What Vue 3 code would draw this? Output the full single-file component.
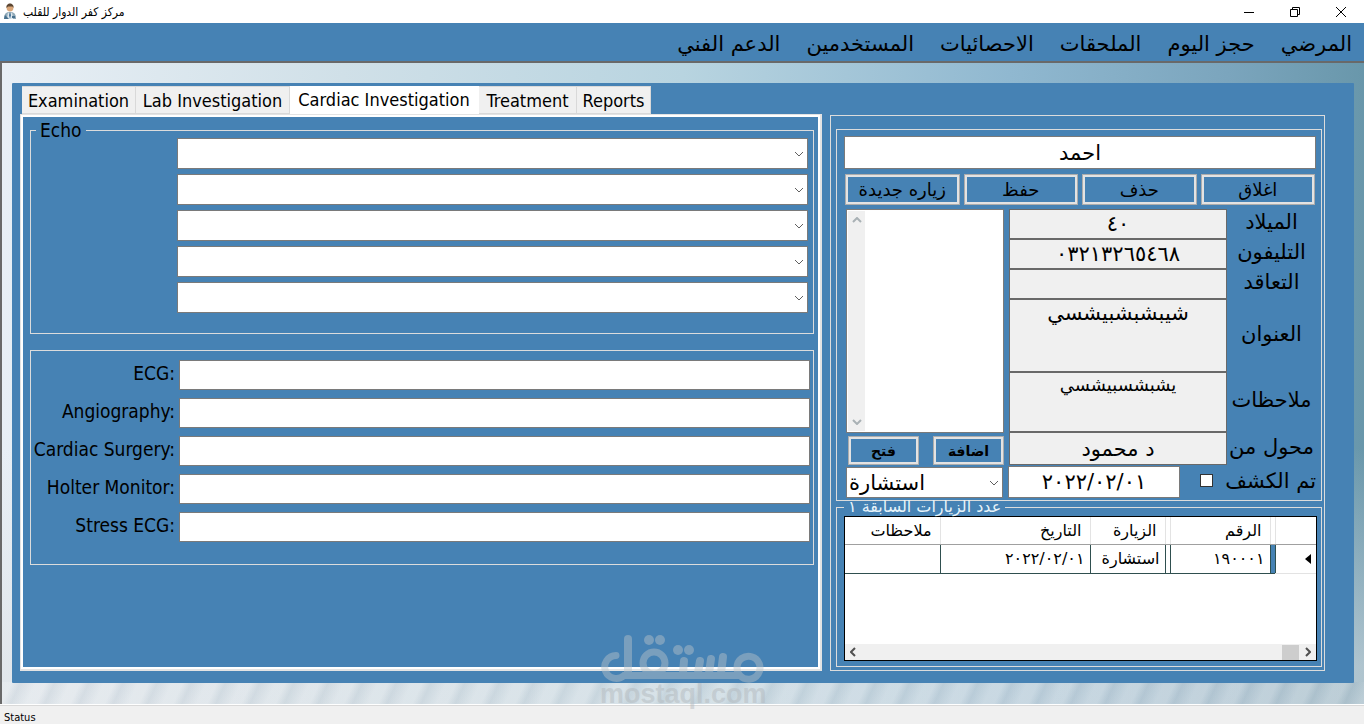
<script setup>
import { ref } from 'vue'

const menu = ['المرضي', 'حجز اليوم', 'الملحقات', 'الاحصائيات', 'المستخدمين', 'الدعم الفني']
const tabs = [
  { name: 'Examination', size: 't-exam' },
  { name: 'Lab Investigation', size: 't-lab' },
  { name: 'Cardiac Investigation', size: 't-cardiac' },
  { name: 'Treatment', size: 't-treat' },
  { name: 'Reports', size: 't-reports' },
]
const active = ref('Cardiac Investigation')
const echo = [1, 2, 3, 4, 5]
const tests = [
  { id: 'ecg', label: 'ECG:' },
  { id: 'angio', label: 'Angiography:' },
  { id: 'surgery', label: 'Cardiac Surgery:' },
  { id: 'holter', label: 'Holter Monitor:' },
  { id: 'stress', label: 'Stress ECG:' },
]
const actions = ['اغلاق', 'حذف', 'حفظ', 'زياره جديدة']
const patientName = ref('احمد')
const address = ref('شيبشبشبيشسي')
const notes = ref('يشبشسبيشسي')
const seen = ref(false)
</script>

<template>
  <div class="window">
    <header class="titlebar">
      <svg class="app-icon" viewBox="0 0 14 17" aria-hidden="true">
        <path d="M1 16c0-4 1-6 4-7h4c3 1 4 3 4 7z" fill="#8fa9b8" />
        <path d="M5 9l2 3 2-3 1 7H4z" fill="#dfe8ee" />
        <path d="M7 10l1 2-1 4-1-4z" fill="#3c6c92" />
        <path d="M2 12l4 4H1zM9 13h3v2H9z" fill="#47708d" />
        <circle cx="7" cy="5" r="3.4" fill="#d9a679" />
        <path d="M3.5 5C3 2 5 .5 7 .5S11 2 10.500 5L9.500 3.500H5z" fill="#5b4632" />
      </svg>
      <h1 class="title" dir="rtl">مركز كفر الدوار للقلب</h1>
      <div class="win-buttons">
        <button type="button" aria-label="Minimize">
          <svg viewBox="0 0 12 12"><path d="M1 6.500h10" /></svg>
        </button>
        <button type="button" aria-label="Restore">
          <svg viewBox="0 0 12 12"><path d="M1.500 3.500h7v7h-7zM3.500 3.500v-2h7v7h-2" /></svg>
        </button>
        <button type="button" aria-label="Close">
          <svg viewBox="0 0 12 12"><path d="M1 1l10 10M11 1L1 11" /></svg>
        </button>
      </div>
    </header>

    <nav class="menubar" dir="rtl">
      <a v-for="m in menu" :key="m" href="#">{{ m }}</a>
    </nav>

    <main class="desktop">
      <div class="sheet">
        <section class="left">
          <div class="tabs" role="tablist">
            <button
              v-for="t in tabs"
              :key="t.name"
              type="button"
              role="tab"
              :aria-selected="active === t.name"
              :class="['tab', t.size, { on: active === t.name }]"
              @click="active = t.name"
            >{{ t.name }}</button>
          </div>
          <div class="tab-page">
            <fieldset class="echo">
              <legend>Echo</legend>
              <div v-for="n in echo" :key="n" class="combo">
                <select :aria-label="'Echo ' + n"><option></option></select>
                <svg viewBox="0 0 10 6" aria-hidden="true"><path d="M1 1l4 4 4-4" /></svg>
              </div>
            </fieldset>
            <div class="tests">
              <template v-for="t in tests" :key="t.id">
                <label :for="t.id">{{ t.label }}</label>
                <input :id="t.id" type="text" />
              </template>
            </div>
          </div>
        </section>

        <section class="right" dir="rtl">
          <div class="patient">
            <input v-model="patientName" class="name" type="text" aria-label="اسم المريض" />
            <div class="actions">
              <button v-for="a in actions" :key="a" type="button" class="btn">{{ a }}</button>
            </div>
            <div class="details">
              <div class="labels">
                <label class="h-row" for="birth">الميلاد</label>
                <label class="h-row" for="phone">التليفون</label>
                <label class="h-row" for="contract">التعاقد</label>
                <label class="h-addr" for="address">العنوان</label>
                <label class="h-notes" for="notes">ملاحظات</label>
                <label class="h-ref" for="referrer">محول من</label>
              </div>
              <div class="fields">
                <input id="birth" class="h-row" readonly value="٤٠" />
                <input id="phone" class="h-row" readonly value="٠٣٢١٣٢٦٥٤٦٨" />
                <input id="contract" class="h-row" readonly value="" />
                <textarea id="address" v-model="address" class="h-addr" readonly></textarea>
                <textarea id="notes" v-model="notes" class="h-notes" readonly></textarea>
                <input id="referrer" class="h-ref" readonly value="د محمود" />
              </div>
              <div class="files">
                <div class="listbox">
                  <select size="2" aria-label="الملفات"></select>
                  <div class="vscroll">
                    <svg viewBox="0 0 10 6" aria-hidden="true"><path d="M1 5l4-4 4 4" /></svg>
                    <svg viewBox="0 0 10 6" aria-hidden="true"><path d="M1 1l4 4 4-4" /></svg>
                  </div>
                </div>
                <div class="file-buttons">
                  <button type="button" class="btn bold">اضافة</button>
                  <button type="button" class="btn bold">فتح</button>
                </div>
              </div>
            </div>
            <div class="visit">
              <label class="seen">تم الكشف <input v-model="seen" type="checkbox" /></label>
              <input class="date" type="text" aria-label="التاريخ" value="٢٠٢٢/٠٢/٠١" />
              <div class="combo kind" dir="ltr">
                <select aria-label="الزيارة"><option>استشارة</option></select>
                <svg viewBox="0 0 10 6" aria-hidden="true"><path d="M1 1l4 4 4-4" /></svg>
              </div>
            </div>
          </div>

          <fieldset class="history">
            <legend>عدد الزيارات السابقة ١</legend>
            <div class="grid">
              <table>
                <colgroup>
                  <col class="c-head" /><col class="c-thin" /><col class="c-no" /><col class="c-thin" />
                  <col class="c-visit" /><col class="c-date" /><col />
                </colgroup>
                <thead>
                  <tr>
                    <th></th><th></th><th>الرقم</th><th></th><th>الزيارة</th><th>التاريخ</th><th>ملاحظات</th>
                  </tr>
                </thead>
                <tbody>
                  <tr>
                    <td class="rowhead">
                      <svg viewBox="0 0 6 10" aria-hidden="true"><path d="M6 0v10L0 5z" /></svg>
                    </td>
                    <td class="picked"></td><td>١٩٠٠٠١</td><td></td><td>استشارة</td><td>٢٠٢٢/٠٢/٠١</td><td></td>
                  </tr>
                </tbody>
              </table>
              <div class="hscroll" dir="ltr">
                <svg viewBox="0 0 6 10" aria-hidden="true"><path d="M5 1L1 5l4 4" /></svg>
                <span class="thumb"></span>
                <svg viewBox="0 0 6 10" aria-hidden="true"><path d="M1 1l4 4-4 4" /></svg>
              </div>
            </div>
          </fieldset>
        </section>
      </div>
    </main>

    <footer class="status">Status</footer>

    <svg class="watermark" viewBox="0 0 166 76" role="img" aria-label="mostaql.com">
      <g opacity=".45">
        <g fill="none" stroke="#b9c2c8" stroke-linecap="round">
          <path d="M16 21.500a11.500 11.500 0 1 0 8 20H140a11.500 11.500 0 1 0-3-8 11.500 11.500 0 0 0 3 8" stroke-width="7" />
          <path d="M28 5v34" stroke-width="8" />
          <circle cx="54" cy="29" r="11" stroke-width="7" />
          <path d="M84 27l-1 12M100 27l-2 12M111 25l-2 14M123 23l-2 16" stroke-width="8" />
        </g>
        <g fill="#b9c2c8">
          <circle cx="49" cy="6" r="5" /><circle cx="60" cy="6" r="5" />
          <circle cx="78" cy="16" r="5" /><circle cx="89" cy="16" r="5" />
        </g>
        <text x="0" y="69">mostaql.com</text>
      </g>
    </svg>
  </div>
</template>

<style>
body {
  margin: 0;
}
</style>

<style scoped>
.window {
  --blue: #4682b4;
  --edge: #dcdcdc;
  position: relative;
  display: flex;
  flex-direction: column;
  min-height: 100vh;
  font-family: 'DejaVu Sans Condensed', 'DejaVu Sans', sans-serif;
  font-size: 19px;
  color: #000;
  background: #f0f0f0;
}
.window *,
.window {
  box-sizing: border-box;
}
button,
input,
select,
textarea {
  font: inherit;
  color: inherit;
  margin: 0;
  border-radius: 0;
}
.titlebar {
  display: flex;
  align-items: center;
  height: 23px;
  padding-left: 3px;
  background: #fff;
}
.app-icon {
  width: 14px;
  height: 17px;
}
.title {
  margin: 0 0 0 6px;
  font-size: 12px;
  font-weight: 400;
}
.win-buttons {
  display: flex;
  margin-left: auto;
}
.win-buttons button {
  display: flex;
  align-items: center;
  justify-content: center;
  width: 46px;
  height: 22px;
  padding: 0;
  border: 0;
  background: none;
}
.win-buttons svg {
  width: 12px;
  height: 12px;
  fill: none;
  stroke: #000;
}
.menubar {
  display: flex;
  align-items: center;
  gap: 26px;
  height: 38px;
  padding: 3px 12px 0;
  background: var(--blue);
}
.menubar a {
  color: #000;
  font-family: 'DejaVu Sans', sans-serif;
  font-size: 21px;
  text-decoration: none;
}
.desktop {
  display: flex;
  flex: 1;
  padding: 20px 10px 21px;
  border-top: 2px solid #696969;
  border-left: 2px solid #696969;
  background:
    repeating-linear-gradient(115deg, rgba(255, 255, 255, 0.16) 0 9px, rgba(120, 145, 165, 0.1) 17px, rgba(255, 255, 255, 0.16) 31px) bottom / 100% 22px no-repeat,
    linear-gradient(to bottom, transparent 60%, rgba(222, 226, 230, 0.6) 94%),
    linear-gradient(to right, #e8eff5 0%, #d0e0e8 25%, #b8d4e0 50%, #90b8d0 74%, #7ba5bd 90%, #6997ab 100%);
}
.sheet {
  display: grid;
  flex: 1;
  grid-template-columns: 802fr 495fr;
  gap: 8px;
  padding: 3px 29px 12px 8px;
  border-radius: 1px;
  background: var(--blue);
}
.left {
  display: flex;
  flex-direction: column;
  min-width: 0;
}
.tabs {
  display: flex;
  height: 28px;
  padding-left: 2px;
}
.tab {
  height: 28px;
  padding: 2px 0 0;
  border: 1px solid #d9d9d9;
  border-left-width: 0;
  background: #f0f0f0;
  font-size: 18px;
  line-height: 24px;
  white-space: nowrap;
}
.tab.on {
  height: 29px;
  padding: 0 0 2px;
  border-color: #fff;
  background: #fff;
}
.t-exam { width: 114px; }
.t-lab { width: 154px; }
.t-cardiac { width: 189px; }
.t-treat { width: 98px; }
.t-reports { width: 74px; }
.tab-page {
  flex: 1;
  padding: 3px 3px 0 6px;
  border: 1px solid #e3e3e3;
  border-width: 1px 2px 2px 1px;
  box-shadow: inset 0 0 0 2px #fff;
}
fieldset {
  min-width: 0;
  margin: 0;
  border: 1px solid var(--edge);
}
.echo {
  display: flex;
  flex-direction: column;
  gap: 5px;
  height: 216px;
  padding: 0 5px 0 146px;
  margin: 0 3px;
}
.echo legend {
  height: 24px;
  margin-left: -141px;
  padding: 0 4px;
  line-height: 24px;
}
.echo .combo:first-of-type {
  margin-top: -4px;
}
.combo {
  position: relative;
  display: flex;
  height: 31px;
}
.combo select {
  flex: 1;
  min-width: 0;
  padding: 0 24px 0 2px;
  border: 1px solid #7a7a7a;
  appearance: none;
  background: #fff;
}
.combo svg {
  position: absolute;
  top: 13px;
  right: 4px;
  width: 10px;
  height: 6px;
  fill: none;
  stroke: #606060;
  pointer-events: none;
}
.tests {
  display: grid;
  grid-template-columns: 144px 1fr;
  gap: 8px 4px;
  height: 215px;
  align-content: start;
  margin: 16px 3px 0;
  padding: 9px 3px 0 0;
  border: 1px solid var(--edge);
}
.tests label {
  text-align: right;
  line-height: 26px;
  white-space: nowrap;
}
.tests input {
  min-width: 0;
  height: 30px;
  border: 1px solid #7a7a7a;
  background: #fff;
}
.right {
  display: flex;
  flex-direction: column;
  min-width: 0;
  margin-top: 29px;
  padding: 13px 2px 3px 5px;
  border: 1px solid var(--edge);
  font-family: 'DejaVu Sans', sans-serif;
  font-size: 21px;
}
.patient {
  height: 372px;
  padding: 6px 5px 0 7px;
  border: 1px solid var(--edge);
}
.name {
  display: block;
  width: 100%;
  height: 33px;
  border: 1px solid #7a7a7a;
  text-align: center;
}
.actions {
  display: grid;
  grid-template-columns: repeat(4, 1fr);
  gap: 4px;
  padding: 0 1px;
  margin-top: 5px;
}
.btn {
  height: 31px;
  padding: 0;
  border: 1px solid #adadad;
  box-shadow: inset 0 0 0 2px #e3e3e3;
  background: var(--blue);
  font-size: 18px;
  line-height: 20px;
}
.bold {
  font-size: 14px;
  font-weight: 700;
}
.details {
  display: flex;
  margin-top: 4px;
}
.labels {
  display: flex;
  flex-direction: column;
  width: 89px;
}
.labels label {
  display: flex;
  align-items: center;
  justify-content: center;
  padding-bottom: 4px;
  line-height: 24px;
  white-space: nowrap;
}
.fields {
  display: flex;
  flex-direction: column;
  flex: 218;
  min-width: 0;
}
.fields input,
.fields textarea {
  width: 100%;
  padding: 0 2px;
  border: 1px solid #696969;
  background: #f0f0f0;
  text-align: center;
  resize: none;
}
.fields textarea {
  line-height: 26px;
}
.fields .h-notes {
  font-size: 18px;
  line-height: 24px;
}
.h-row { height: 30px; }
.h-addr { height: 73px; }
.h-notes { height: 60px; }
.h-ref { height: 33px; }
.files {
  display: flex;
  flex-direction: column;
  flex: 158;
  min-width: 0;
  margin: 0 5px 0 2px;
}
.listbox {
  display: flex;
  height: 224px;
  padding: 1px;
  border: 1px solid #7a7a7a;
  background: #fff;
}
.listbox select {
  flex: 1;
  min-width: 0;
  border: 0;
  background: #fff;
}
.vscroll {
  display: flex;
  flex-direction: column;
  justify-content: space-between;
  align-items: center;
  width: 17px;
  padding: 6px 0;
  background: #f0f0f0;
}
.vscroll svg {
  width: 10px;
  height: 6px;
  fill: none;
  stroke: #a9b1b5;
  stroke-width: 2;
}
.file-buttons {
  display: flex;
  justify-content: space-between;
  margin: 3px 0 0 2px;
}
.file-buttons .btn {
  width: 71px;
  height: 29px;
}
.visit {
  display: flex;
  margin-top: 1px;
}
.seen {
  display: flex;
  align-items: center;
  gap: 12px;
  width: 136px;
  padding-bottom: 3px;
  white-space: nowrap;
}
.seen input {
  width: 13px;
  height: 13px;
  border: 1px solid #333;
  appearance: none;
  background: #fff;
}
.seen input:checked {
  background: #333;
}
.date {
  flex: 171;
  min-width: 0;
  height: 32px;
  padding: 0;
  border: 1px solid #7a7a7a;
  text-align: center;
}
.kind {
  flex: 158;
  margin: 1px 5px 0 2px;
}
.history {
  flex: 1;
  padding: 0 4px 4px 7px;
}
.history legend {
  height: 12px;
  margin-right: auto;
  margin-left: 0;
  padding: 0 4px;
  color: #e8f4fa;
  font-size: 16px;
  line-height: 12px;
}
.grid {
  display: flex;
  flex-direction: column;
  min-height: 145px;
  margin-top: 3px;
  border: 1px solid #000;
  background: #fff;
}
table {
  width: 100%;
  border-collapse: collapse;
  table-layout: fixed;
  font-size: 16px;
}
.c-head { width: 41px; }
.c-thin { width: 5px; }
.c-no { width: 100px; }
.c-visit { width: 75px; }
.c-date { width: 150px; }
th,
td {
  padding: 0;
  overflow: hidden;
  font-weight: 400;
  line-height: 20px;
  text-align: right;
  white-space: nowrap;
}
th {
  height: 27px;
  padding-top: 2px;
  border-bottom: 1px solid #a0a0a0;
  border-left: 1px solid #e3e3e3;
}
td {
  height: 29px;
  border-bottom: 1px solid #2f4f4f;
  border-left: 1px solid #2f4f4f;
}
th:nth-child(n + 3) { padding-right: 8px; }
td:nth-child(n + 3) { padding-right: 5px; }
th:nth-child(4),
td:nth-child(4) { padding-right: 0; }
th:last-child,
td:last-child { border-left: 0; }
.rowhead {
  padding-right: 5px;
  border-bottom-color: #e3e3e3;
}
.rowhead svg {
  display: block;
  width: 6px;
  height: 10px;
}
.picked {
  background: var(--blue);
}
.hscroll {
  display: flex;
  align-items: center;
  height: 16px;
  margin-top: auto;
  padding: 0 5px;
  background: #f0f0f0;
}
.hscroll svg {
  width: 6px;
  height: 10px;
  fill: none;
  stroke: #505050;
  stroke-width: 2;
}
.thumb {
  width: 17px;
  height: 15px;
  margin-left: auto;
  margin-right: 6px;
  background: #cdcdcd;
}
.status {
  height: 20px;
  padding: 5px 4px 0;
  border-top: 1px solid #fff;
  box-shadow: inset 0 1px 0 #d9d9d9;
  background: #f0f0f0;
  font-size: 11px;
  line-height: 16px;
}
.watermark {
  position: absolute;
  bottom: 14px;
  left: 44%;
  width: 166px;
  height: 76px;
  pointer-events: none;
}
.watermark text {
  fill: #b0b6ba;
  font-family: 'Liberation Sans', sans-serif;
  font-size: 27px;
  font-weight: 700;
}
</style>
